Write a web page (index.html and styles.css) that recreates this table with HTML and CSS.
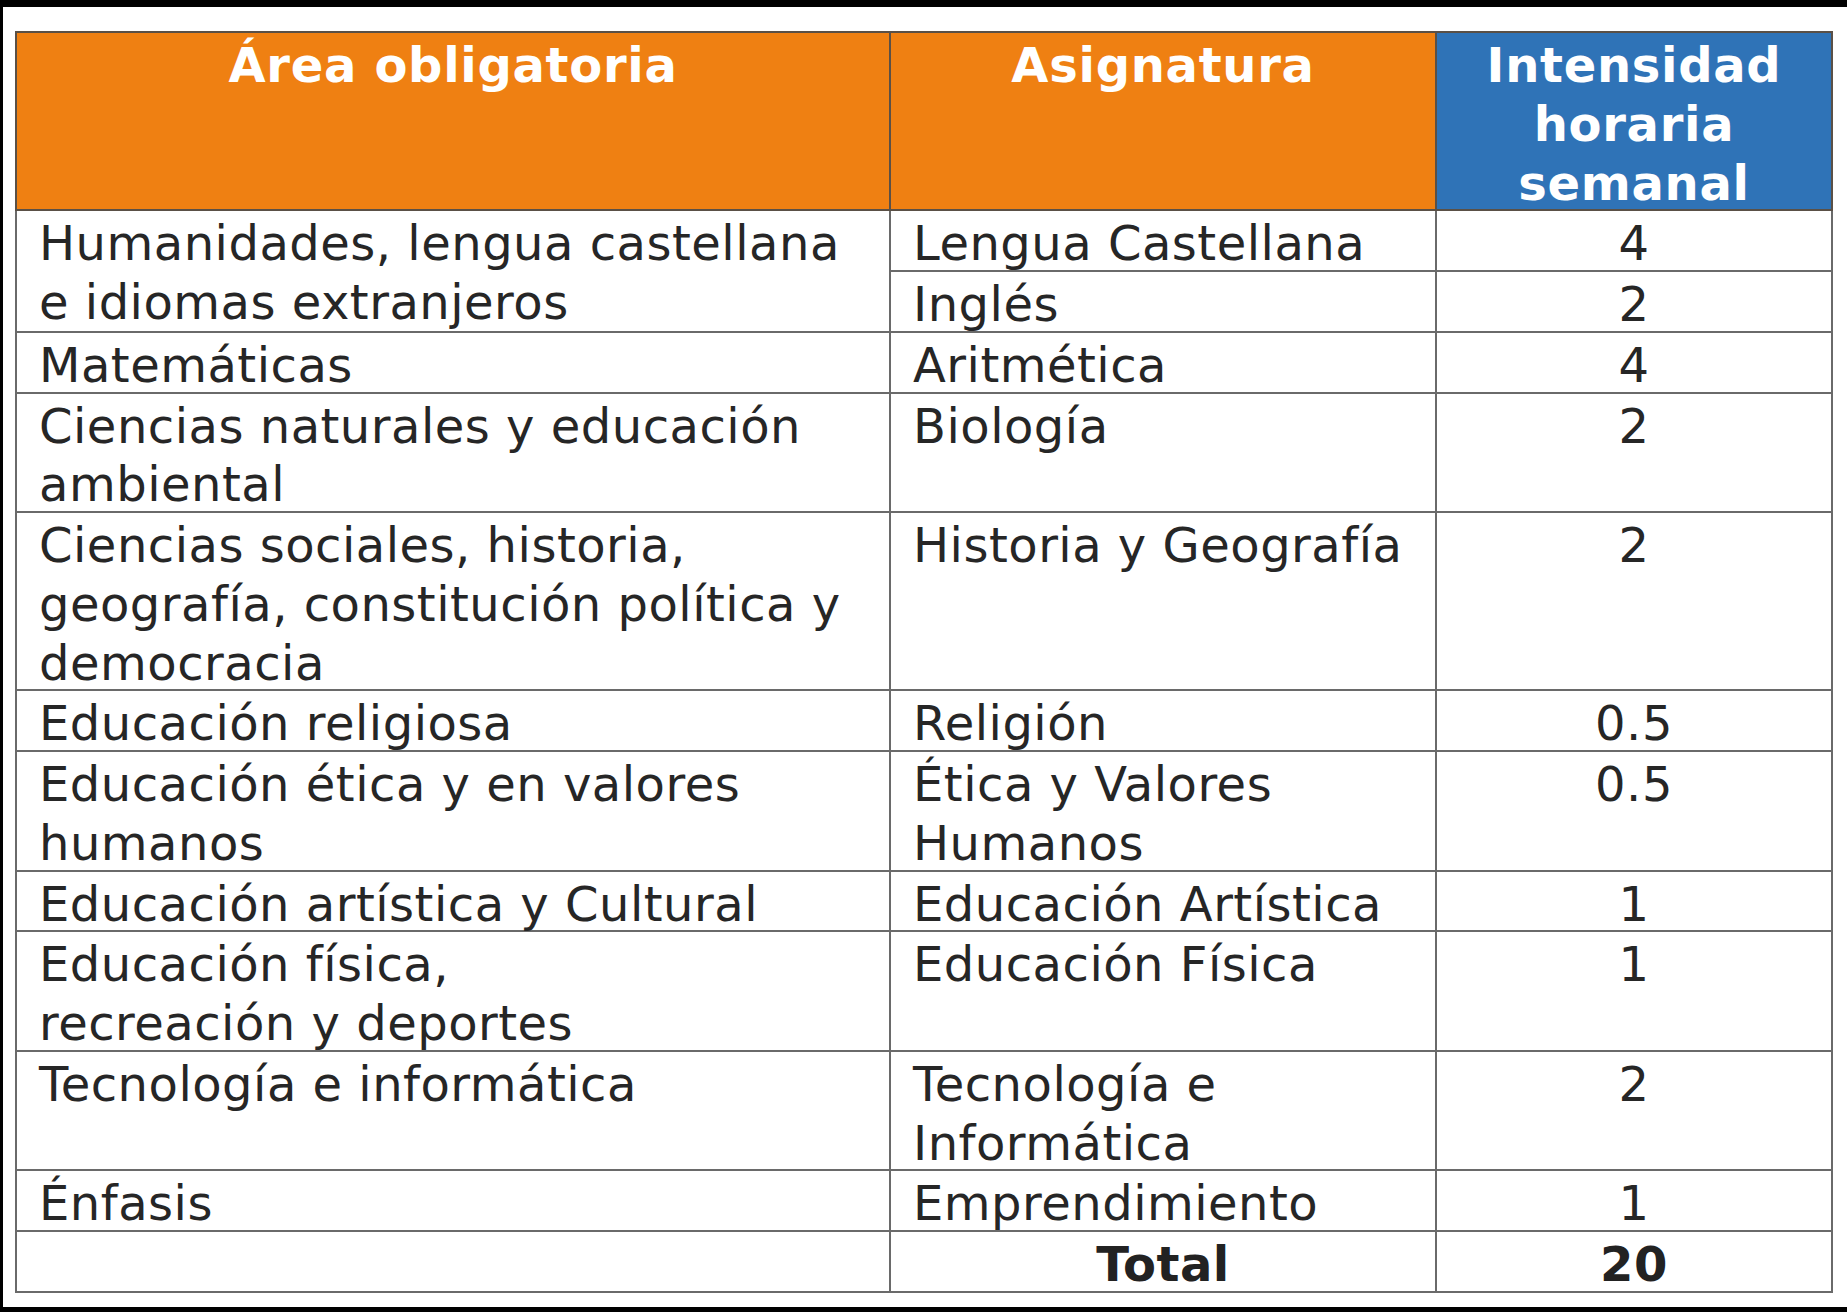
FILE: index.html
```html
<!DOCTYPE html>
<html lang="es">
<head>
<meta charset="utf-8">
<title>Intensidad horaria</title>
<link rel="stylesheet" href="styles.css">
</head>
<body>
<div class="frame">
  <table class="plan">
    <colgroup>
      <col class="c-area">
      <col class="c-asig">
      <col class="c-hrs">
    </colgroup>
    <thead>
      <tr>
        <th class="h-orange"><div class="t">Área obligatoria</div></th>
        <th class="h-orange"><div class="t">Asignatura</div></th>
        <th class="h-blue"><div class="t">Intensidad<br>horaria<br>semanal</div></th>
      </tr>
    </thead>
    <tbody>
      <tr>
        <td rowspan="2"><div class="t">Humanidades, lengua castellana<br>e idiomas extranjeros</div></td>
        <td><div class="t">Lengua Castellana</div></td>
        <td class="num"><div class="t">4</div></td>
      </tr>
      <tr>
        <td><div class="t">Inglés</div></td>
        <td class="num"><div class="t">2</div></td>
      </tr>
      <tr>
        <td><div class="t">Matemáticas</div></td>
        <td><div class="t">Aritmética</div></td>
        <td class="num"><div class="t">4</div></td>
      </tr>
      <tr>
        <td><div class="t">Ciencias naturales y educación<br>ambiental</div></td>
        <td><div class="t">Biología</div></td>
        <td class="num"><div class="t">2</div></td>
      </tr>
      <tr>
        <td><div class="t">Ciencias sociales, historia,<br>geografía, constitución política y<br>democracia</div></td>
        <td><div class="t">Historia y Geografía</div></td>
        <td class="num"><div class="t">2</div></td>
      </tr>
      <tr>
        <td><div class="t">Educación religiosa</div></td>
        <td><div class="t">Religión</div></td>
        <td class="num"><div class="t">0.5</div></td>
      </tr>
      <tr>
        <td><div class="t">Educación ética y en valores<br>humanos</div></td>
        <td><div class="t">Ética y Valores<br>Humanos</div></td>
        <td class="num"><div class="t">0.5</div></td>
      </tr>
      <tr>
        <td><div class="t">Educación artística y Cultural</div></td>
        <td><div class="t">Educación Artística</div></td>
        <td class="num"><div class="t">1</div></td>
      </tr>
      <tr>
        <td><div class="t">Educación física,<br>recreación y deportes</div></td>
        <td><div class="t">Educación Física</div></td>
        <td class="num"><div class="t">1</div></td>
      </tr>
      <tr>
        <td><div class="t">Tecnología e informática</div></td>
        <td><div class="t">Tecnología e<br>Informática</div></td>
        <td class="num"><div class="t">2</div></td>
      </tr>
      <tr>
        <td><div class="t">Énfasis</div></td>
        <td><div class="t">Emprendimiento</div></td>
        <td class="num"><div class="t">1</div></td>
      </tr>
      <tr class="total">
        <td><div class="t"></div></td>
        <td class="num"><div class="t">Total</div></td>
        <td class="num"><div class="t">20</div></td>
      </tr>
    </tbody>
  </table>
</div>
</body>
</html>
```

FILE: styles.css
```css
html, body {
  margin: 0;
  padding: 0;
  background: #000;
}

body {
  width: 1847px;
  height: 1312px;
  overflow: hidden;
}

.frame {
  margin: 7px 0 0 3px;
  height: 1300px;
  background: #fff;
  padding: 24px 0 0 12px;
  box-sizing: border-box;
}

.plan {
  border-collapse: collapse;
  table-layout: fixed;
  width: 1816px;
  font-family: "DejaVu Sans", Verdana, sans-serif;
  font-size: 48px;
  letter-spacing: 0.5px;
  color: #262626;
  border: 2px solid #5e5e5e;
}

.c-area { width: 874px; }
.c-asig { width: 546px; }
.c-hrs { width: 396px; }

.plan th,
.plan td {
  border: 2px solid #6a6a6a;
  padding: 0 22px;
  vertical-align: top;
  text-align: left;
  line-height: 58.75px;
  white-space: nowrap;
}

.plan .t {
  padding-top: 3px;
  margin-bottom: -3px;
  min-height: 58.75px;
}

.plan th {
  color: #fff;
  font-weight: bold;
  letter-spacing: 0.7px;
  text-align: center;
  border-color: #5a5046;
}

.h-orange {
  background: #ef8012;
}

.h-blue {
  background: #2f73b7;
}

.plan td.num {
  text-align: center;
}

.total td {
  font-weight: bold;
  color: #222;
}
```
